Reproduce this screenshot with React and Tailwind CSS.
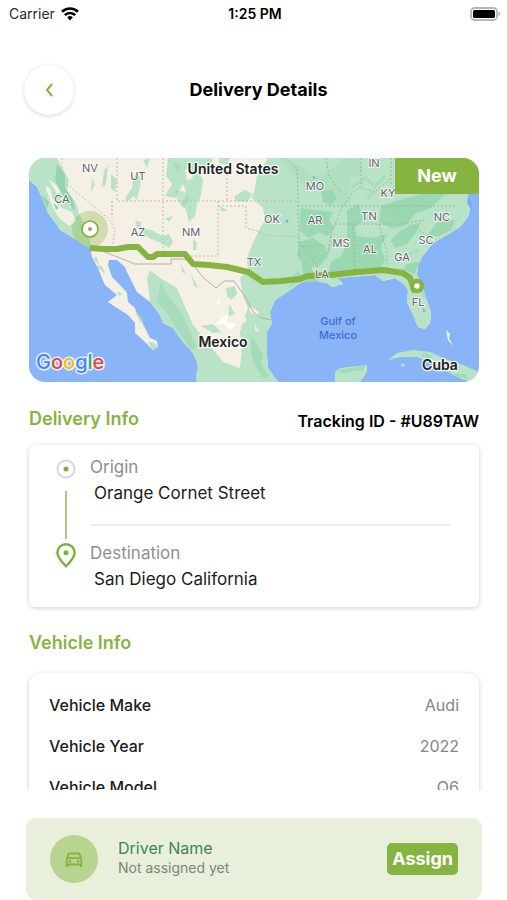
import { MdOutlineDirectionsCar } from 'react-icons/md'

const VEHICLE = [
  { label: 'Vehicle Make', value: 'Audi' },
  { label: 'Vehicle Year', value: '2022' },
  { label: 'Vehicle Model', value: 'Q6' },
]

const STATES = [
  ['NV', 61, 14], ['UT', 109, 22], ['CA', 33, 45], ['AZ', 109, 78], ['NM', 162, 78],
  ['IN', 345, 9], ['MO', 286, 32], ['KY', 359, 39], ['OK', 243, 65], ['AR', 286, 66],
  ['TN', 340, 62], ['NC', 413, 63], ['MS', 312, 89], ['AL', 341, 95], ['SC', 397, 86],
  ['GA', 373, 103], ['TX', 225, 108], ['LA', 293, 120], ['FL', 389, 148],
]

const GOOGLE = [
  ['G', '#4285f4'], ['o', '#ea4335'], ['o', '#fbbc05'],
  ['g', '#4285f4'], ['l', '#34a853'], ['e', '#ea4335'],
]

function StatusBar() {
  return (
    <div className="grid h-7 shrink-0 grid-cols-3 items-center pl-[9px] pr-1.5 text-sm text-gray-800">
      <div className="flex items-center gap-1.5">
        <span>Carrier</span>
        <svg viewBox="0 0 18 14" className="h-3.5 w-[18px]" fill="none" stroke="#000" strokeWidth="2.6" aria-hidden="true">
          <path d="M1 4.8a11.4 11.4 0 0 1 16 0" />
          <path d="M3.8 8.2a7.4 7.4 0 0 1 10.4 0" />
          <path d="M6.2 10.4a4 4 0 0 1 5.6 0L9 13.400z" fill="#000" stroke="none" />
        </svg>
      </div>
      <span className="text-center font-semibold text-black">1:25 PM</span>
      <svg viewBox="0 0 31 15" className="h-[15px] w-[31px] justify-self-end" aria-hidden="true">
        <rect x="1" y="1" width="26" height="12" rx="3.5" fill="#fff" stroke="#b5b5b5" strokeWidth="1.8" />
        <rect x="3" y="3" width="22" height="8" rx="1.5" fill="#000" />
        <path d="M28.5 4.8c2.4.6 2.4 3.8 0 4.4z" fill="#b5b5b5" />
      </svg>
    </div>
  )
}

function RouteMap() {
  return (
    <svg viewBox="0 0 450 224" preserveAspectRatio="xMidYMid slice" className="block w-full" role="img" aria-label="Route map">
      <rect width="450" height="224" fill="#8ab4f8" />

      {/* mainland */}
      <path
        fill="#f5f0e5"
        d="M0 0V22L8 29 14 42 19 55 28 67 31 72 48 82 54 87 61 89 63 99 69 110 73 120 76 127 88 137 79 144 88 150 99 157 106 165 106 175 114 182 124 192 129 189 128 183 121 180 116 170 108 157 106 150 99 144 98 135 91 127 83 119 79 107 80 102 88 102 96 109 98 114 103 124 108 134 121 144 131 157 134 165 144 170 154 184 164 195 168 204 169 210 167 217 168 224H249L239 210 238 197 238 174 243 165 241 154 246 142 254 137 264 130 273 124 284 123 298 125 303 129 314 126 309 120 321 119 334 118 346 117 354 123 366 120 376 127 379 132 378 144 384 157 389 169 396 171 401 165 402 154 396 137 393 127 388 117 389 107 393 99 404 85 418 77 431 69 439 59 441 52 438 42 439 35 446 20V0z"
      />

      {/* vegetation */}
      <g fill="#b8e3c6">
        <path d="M239 0 234 8 228 17 226 30 223 40 234 50 236 62 229 74 223 87 218 100 219 112 211 120 214 137 219 150 214 164 211 174 213 190 211 210 194 204 178 184 164 167 154 144 148 130 131 120 121 112 118 120 121 144 131 157 134 165 144 170 154 184 164 195 168 204 169 210 167 217 168 224H249L239 210 238 197 238 174 243 165 241 154 246 142 254 137 264 130 273 124 284 123 298 125 303 129 314 126 309 120 321 119 334 118 346 117 354 123 366 120 376 127 379 132 378 144 384 157 389 169 396 171 401 165 402 154 396 137 393 127 388 117 389 107 393 99 404 85 418 77 431 69 439 59 441 52 438 42 439 35 446 20V0z" />
        <path d="M0 0H28L32 8 40 22 38 32 47 45 51 58 57 70 63 90 54 87 48 82 31 72 28 67 19 55 14 42 8 29 0 22z" />
        <path d="M139 0H184L181 9 170 14 174 22 172 38 168 46 166 58 160 64 157 52 153 46 158 36 154 26 146 40 136 38 143 26 137 18z" />
        <path d="M190 0H201L197 7 190 5zM206 38 216 32 224 36 218 44 206 43zM105 38 98 44 96 40 103 30 105 18 109 14 112 24 108 42z" />
        <path d="M82 16 88 22 86 34 82 30zM63 20 66 26 62 34zM75 12 79 8 77 26 73 30zM114 2 121 0 118 10z" />
        <path d="M106 62 112 64 112 70 122 72 134 78 140 76 144 84 140 90 130 84 120 80 108 70zM164 82 168 84 167 92 164 92zM136 60 144 58 140 64zM190 48 198 52 193 54z" />
        <path d="M197 130 206 128 208 136 202 142 198 138zM200 146 206 156 200 158zM172 168 184 166 192 174 184 175zM162 116 169 130 165 128zM152 106 157 116 153 114z" />
        <path d="M129 189 124 192 119 184 124 184zM106 152 112 160 116 170 110 162zM88 133 94 136 90 138zM66 107 73 108 76 116zM67 98 71 108 65 102z" />
        <path d="M359 202 368 195 384 192 401 194 414 200 434 207 450 214V220L438 223 424 217 408 207 388 199 371 199zM306 224V214L311 210 338 207 338 214 331 224zM372 205 377 207 373 209z" />
        <path d="M417 172 421 176 420 180 424 188 419 182z" fill="#eef3ea" />
      </g>
      <g fill="#f5f0e5">
        <path d="M16 28 21 30 24 42 33 50 43 54 47 64 40 68 30 60 24 50zM20 22 26 26 32 34 28 36zM37 36 44 48 41 50z" />
        <path d="M221 148 230 154 228 158 221 154zM213 156 218 162 214 166zM226 166 230 174 226 172zM156 12 162 10 164 20 158 22z" />
      </g>

      {/* denser forest */}
      <g fill="#93d5ab">
        <path d="M252 0 262 6 274 10 282 18 294 18 304 10 316 0H328L334 14 322 20 318 34 322 44 312 50 304 40 294 36 288 24 276 28 264 16z" opacity=".25" />
        <path d="M292 34 302 32 308 40 302 48 294 44zM272 50 286 52 304 54 300 62 306 70 298 78 290 74 280 80 270 72zM270 84 284 80 296 88 298 100 290 108 278 110 268 98zM272 104 282 110 290 124H276z" opacity=".8" />
        <path d="M318 52 330 46 334 62 326 70 328 78 342 80 358 76 352 88 356 102 350 112 318 114 300 114 302 104 312 98 318 84zM352 48 364 44 392 36 410 26 424 18 436 26 428 34 414 38 402 50 386 56 376 68 362 70 350 64z" opacity=".8" />
        <path d="M370 74 380 68 392 64 386 76 378 86 366 90 362 82zM378 106 390 104 386 116 374 112zM408 64 426 62 422 72 410 78 398 78z" opacity=".8" />
        <path d="M28 6 36 16 36 30 44 42 46 54 40 46 32 34 26 22zM24 44 30 50 27 52zM12 36 20 44 18 50z" />
        <path d="M146 32 158 34 160 42 154 50 148 42zM144 4 152 8 148 14zM132 124 140 140 152 154 162 176 168 190 162 192 148 172 140 158 128 144z" opacity=".5" />
        <path d="M222 178 228 186 234 198 232 206 240 218 234 220 226 208 222 196zM310 212 336 208 334 212 312 215zM394 194 404 198 402 201 392 198zM424 216 436 216 440 221 430 219zM268 112 276 120 260 130z" opacity=".6" />
      </g>
      <path
        d="M322 30 336 20 346 28 356 18M354 58 376 50 402 44M338 40 346 34M296 100 304 84 300 74M388 124 396 140M380 96 390 92"
        fill="none" stroke="#93d5ab" strokeWidth="3" opacity=".4"
      />
      <path d="M192 160 199 156 198 164 207 166 202 172 194 166 186 167zM187 144 191 140 190 147z" fill="#fff" />

      {/* lakes */}
      <g fill="#74a9f5">
        <circle cx="258" cy="63" r="1.5" />
        <path d="M284 17 287 21 284 20zM440 40 444 50 438 46zM394 150 397 153 394 154z" />
      </g>

      {/* state lines */}
      <g fill="none" stroke="#c0bab4" strokeDasharray="2 2">
        <path d="M33 0V22L81 62 86 72 83 90M88 0V43H270M134 0V98M189 43V98H156M198 0V43M189 48H217V70L228 73 236 77 270 79" />
        <path
          d="M83 43V60M257 0 268 10 269 42 270 98M268 48H428M332 0V28L322 36 312 52 302 76 298 98M297 0 300 18 312 34M362 0V26M332 30 346 34 362 20M306 66H372L396 62M324 66 326 114M350 66 358 94V112M272 88H296M380 66 402 80M274 88 288 108 290 122"
          stroke="#93b8a1"
        />
      </g>
      <path d="M71 92 106 106H142V101H156L164 107 175 120 187 130 195 123H205L215 137 225 155 233 160 243 162" fill="none" stroke="#b4afaa" />

      {/* route */}
      <circle cx="61" cy="71" r="18" fill="#86b440" opacity=".32" />
      <path
        d="M61 90 75 91 88 91 99 89 109 89 115 95 119 99 124 99 128 96H156L164 106 180 107 198 109 219 114 234 124 252 123 271 121 278 118 302 117 328 114 354 112 374 115 381 120 386 134"
        fill="none" stroke="#86b440" strokeWidth="6" strokeLinejoin="round"
      />
      <circle cx="61" cy="71" r="8" fill="#fff" stroke="#86a83c" strokeWidth="1.6" />
      <circle cx="61" cy="71" r="2" fill="#86b440" />
      <circle cx="388" cy="128" r="5" fill="#fff" stroke="#86b440" strokeWidth="4.5" />

      <g textAnchor="middle" fontSize="11" fill="#5f6368" stroke="#fff" strokeOpacity=".8" strokeWidth="2" paintOrder="stroke">
        {STATES.map(([name, x, y]) => (
          <text key={name} x={x} y={y}>{name}</text>
        ))}
      </g>
      <g textAnchor="middle" fontSize="14" fontWeight="600" fill="#202124" stroke="#fff" strokeOpacity=".8" strokeWidth="2.5" paintOrder="stroke">
        <text x="204" y="16">United States</text>
        <text x="194" y="189">Mexico</text>
        <text x="411" y="212">Cuba</text>
      </g>
      <g textAnchor="middle" fontSize="11" fontWeight="500" fill="#3b6fce">
        <text x="309" y="167">Gulf of</text>
        <text x="309" y="181">Mexico</text>
      </g>
      <text x="7" y="211" fontSize="20" fontWeight="500" stroke="#fff" strokeOpacity=".8" strokeWidth="3" strokeLinejoin="round" paintOrder="stroke">
        {GOOGLE.map(([letter, fill], i) => <tspan key={i} fill={fill}>{letter}</tspan>)}
      </text>
    </svg>
  )
}

function DeliveryCard() {
  return (
    <section className="mt-3 flex gap-3.5 rounded-md bg-white pt-2.5 pr-7 pb-4 pl-[27px] shadow-[0_1px_5px_rgba(0,0,0,0.2)]">
      <div className="flex w-5 shrink-0 flex-col items-center pt-1">
        <svg viewBox="0 0 20 20" className="size-5" aria-hidden="true">
          <circle cx="10" cy="10" r="8.6" fill="none" stroke="#d8d8dc" strokeWidth="2" />
          <circle cx="10" cy="10" r="2.5" fill="#7ab13c" />
        </svg>
        <span className="mt-3 mb-1 h-12 w-0.5 bg-[#a9cd7c]" />
        <svg viewBox="0 0 20 25" className="h-[25px] w-5" aria-hidden="true">
          <path d="M10 23.2C6 19.2 1.4 14.8 1.4 9.8a8.6 8.6 0 0 1 17.2 0c0 5-4.600 9.400-8.600 13.400z" fill="none" stroke="#7ab13c" strokeWidth="2.4" />
          <circle cx="10" cy="9.8" r="2.5" fill="#7ab13c" />
        </svg>
      </div>
      <dl className="min-w-0 flex-1 text-[17px] leading-6">
        <dt className="text-[#8e8e8e]">Origin</dt>
        <dd className="mt-0.5 pl-1 text-[#1c1c1c]">Orange Cornet Street</dd>
        <dt className="mt-[19px] border-t-2 border-[#eeeeee] pt-[15px] text-[#8e8e8e]">Destination</dt>
        <dd className="mt-0.5 pl-1 text-[#1c1c1c]">San Diego California</dd>
      </dl>
    </section>
  )
}

function DriverBar() {
  return (
    <footer className="mr-[25px] ml-[26px] mt-7 flex h-[82px] shrink-0 items-center gap-5 rounded-[10px] bg-[#e8f0dc] px-6">
      <div className="flex size-12 items-center justify-center rounded-full bg-[#b7d491] text-[#86b440]">
        <MdOutlineDirectionsCar className="size-[22px]" />
      </div>
      <div className="flex-1 pb-0.5">
        <p className="text-base leading-5 text-[#3f8457]">Driver Name</p>
        <p className="text-sm leading-5 text-[#7d847a]">Not assigned yet</p>
      </div>
      <button className="h-8 rounded-[5px] bg-[#86b440] px-[5px] text-lg font-bold leading-6 text-white">Assign</button>
    </footer>
  )
}

export default function App() {
  return (
    <div className="flex h-screen flex-col bg-white font-['Inter','Liberation_Sans',sans-serif]">
      <StatusBar />

      <header className="mt-[37px] flex shrink-0 items-center px-6">
        <button
          aria-label="Back"
          className="flex size-[50px] items-center justify-center rounded-full bg-white shadow-[0_1px_4px_rgba(0,0,0,0.16)]"
        >
          <svg viewBox="0 0 8 14" className="h-3.5 w-2" fill="none" stroke="#86b440" strokeWidth="2" aria-hidden="true">
            <path d="M7 1 2 7l5 6" />
          </svg>
        </button>
        <h1 className="flex-1 text-center text-lg font-bold text-black">Delivery Details</h1>
        <span className="w-10" />
      </header>

      <main className="min-h-0 flex-1 overflow-y-auto pt-[43px] pr-7 pl-[29px] [scrollbar-width:none]">
        <div className="relative overflow-hidden rounded-2xl">
          <RouteMap />
          <span className="absolute top-0 right-0 flex h-9 w-[84px] items-center justify-center bg-[#86b440] text-lg font-bold text-white">
            New
          </span>
        </div>

        <div className="mt-[23px] flex items-center justify-between">
          <h2 className="text-lg font-semibold text-[#86b440]">Delivery Info</h2>
          <p className="pt-1 text-base font-semibold text-black">Tracking ID - #U89TAW</p>
        </div>
        <DeliveryCard />

        <h2 className="mt-[22px] text-lg font-semibold text-[#86b440]">Vehicle Info</h2>
        <dl className="mt-4 flex flex-col gap-[17px] rounded-xl bg-white px-5 py-5 text-base shadow-[0_1px_5px_rgba(0,0,0,0.2)]">
          {VEHICLE.map(row => (
            <div key={row.label} className="flex justify-between">
              <dt className="font-medium text-[#1c1c1c]">{row.label}</dt>
              <dd className="text-[#858585]">{row.value}</dd>
            </div>
          ))}
        </dl>
      </main>

      <DriverBar />
    </div>
  )
}
